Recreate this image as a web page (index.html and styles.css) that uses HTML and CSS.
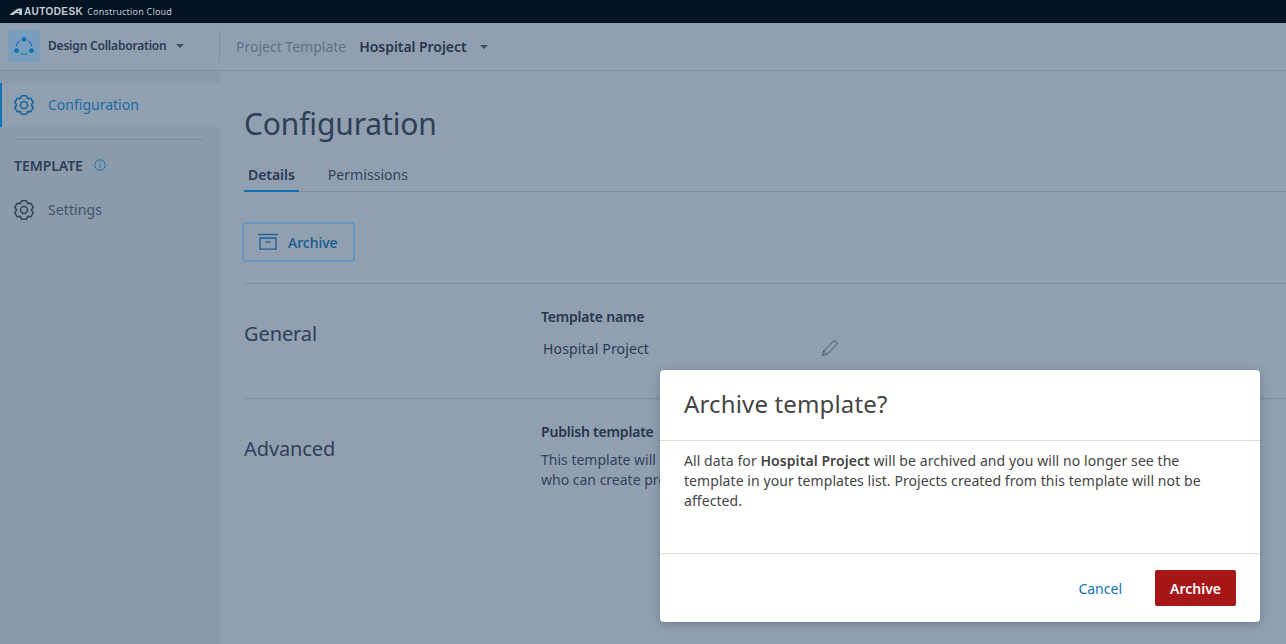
FILE: index.html
```html
<!DOCTYPE html>
<html lang="en">
<head>
<meta charset="utf-8">
<title>Configuration</title>
<link rel="stylesheet" href="styles.css">
</head>
<body>
<div class="app">
  <div class="brandbar">
    <svg class="brand-logo" width="12" height="7" viewBox="0 0 12 7"><path d="M0 7 L0.300 6 L7 1 Q7.800 0.400 9 0.400 L12 0.400 L12 7 L9.300 7 L9.300 5.300 L5.500 5.300 L3.400 7 Z M7 3.900 L9.300 3.900 L9.300 2.200 Z" fill="#c4cad0" fill-rule="evenodd"/></svg>
    <span class="brand-name">AUTODESK</span>
    <span class="brand-product">Construction Cloud</span>
  </div>
  <header class="header">
    <div class="product">
      <div class="product-icon">
        <svg width="22" height="22" viewBox="0 0 22 22" fill="none">
          <circle cx="11" cy="4.200" r="2.300" fill="#0f6fae"/>
          <circle cx="3.600" cy="15.600" r="2.300" fill="#0f6fae"/>
          <circle cx="18.400" cy="15.600" r="2.300" fill="#0f6fae"/>
          <path d="M6.600 5.600 A9 9 0 0 0 3.200 11.200 M15.400 5.600 A9 9 0 0 1 18.800 11.200 M7.600 19 H14.400" stroke="#0f6fae" stroke-width="1.100"/>
        </svg>
      </div>
      <span class="product-name">Design Collaboration</span>
      <span class="caret"></span>
    </div>
    <div class="crumbs">
      <span class="crumb-muted">Project Template</span>
      <span class="crumb-strong">Hospital Project</span>
      <span class="caret"></span>
    </div>
  </header>
  <div class="body">
    <aside class="sidebar">
      <div class="nav-item nav-active">
        <svg class="gear" width="22" height="22" viewBox="0 0 24 24" fill="none" stroke="#16659c" stroke-width="1.700" stroke-linejoin="round"><path d="M9.460 1.810H14.540L16 5.070 19.550 4.700 22.090 9.100 20 12 22.090 14.900 19.550 19.300 16 18.930 14.540 22.190H9.460L8 18.930 4.450 19.300 1.910 14.900 4 12 1.910 9.100 4.450 4.700 8 5.070Z"/><circle cx="12" cy="12" r="3.800"/></svg>
        <span>Configuration</span>
      </div>
      <div class="nav-rule"></div>
      <div class="nav-section">
        <span>TEMPLATE</span>
        <svg width="12" height="12" viewBox="0 0 12 12" fill="none" stroke="#1f76b2"><circle cx="6" cy="6" r="5.200"/><path d="M6 5.200V9M6 3v1.200"/></svg>
      </div>
      <div class="nav-item nav-plain">
        <svg class="gear" width="22" height="22" viewBox="0 0 24 24" fill="none" stroke="#36465c" stroke-width="1.700" stroke-linejoin="round"><path d="M9.460 1.810H14.540L16 5.070 19.550 4.700 22.090 9.100 20 12 22.090 14.900 19.550 19.300 16 18.930 14.540 22.190H9.460L8 18.930 4.450 19.300 1.910 14.900 4 12 1.910 9.100 4.450 4.700 8 5.070Z"/><circle cx="12" cy="12" r="3.800"/></svg>
        <span>Settings</span>
      </div>
    </aside>
    <main class="main">
      <h1 class="title">Configuration</h1>
      <div class="tabs">
        <div class="tab tab-active">Details</div>
        <div class="tab">Permissions</div>
      </div>
      <button class="archive-btn">
        <svg width="22" height="18" viewBox="0 0 22 18" fill="none" stroke="#175f98" stroke-width="1.300"><path d="M1 1.500H21"/><path d="M3 5H19V16.200H3Z" stroke-linejoin="round"/><path d="M8.500 9H13.500"/></svg>
        <span>Archive</span>
      </button>
      <section class="section">
        <h2 class="section-title">General</h2>
        <div class="section-body">
          <div class="label">Template name</div>
          <div class="name-row">
            <span class="value">Hospital Project</span>
            <svg width="18" height="18" viewBox="0 0 18 18" fill="none" stroke="#445366" stroke-width="1" stroke-linejoin="round"><path d="M1.500 16.500L2.700 12 12.200 2.400a1.800 1.800 0 0 1 2.600 0l.7.700a1.800 1.800 0 0 1 0 2.600L6 15.300Z"/><path d="M2.700 12L6 15.300"/></svg>
          </div>
        </div>
      </section>
      <section class="section section-adv">
        <h2 class="section-title">Advanced</h2>
        <div class="section-body">
          <div class="label">Publish template</div>
          <p class="desc">This template will be published and available to all members<br>who can create projects in this account.</p>
        </div>
      </section>
    </main>
  </div>
  <div class="modal">
    <div class="modal-head">Archive template?</div>
    <div class="modal-text">All data for <b>Hospital Project</b> will be archived and you will no longer see the template in your templates list. Projects created from this template will not be affected.</div>
    <div class="modal-foot">
      <span class="cancel">Cancel</span>
      <button class="confirm">Archive</button>
    </div>
  </div>
</div>
</body>
</html>
```
FILE: styles.css
```css
* { box-sizing: border-box; }
html, body { margin: 0; height: 100%; }
body { font-family: "Noto Sans", "Open Sans", sans-serif; font-size: 14px; color: #2b3a50; background: #90a0b1; overflow: hidden; }
.app { position: relative; width: 1286px; height: 644px; overflow: hidden; display: flex; flex-direction: column; }

.brandbar { height: 23px; flex: none; background: #021324; display: flex; align-items: center; padding-left: 10px; color: #c4cad0; }
.brand-logo { margin-right: 2px; }
.brand-name { font-family: "Liberation Sans", sans-serif; font-weight: 700; font-size: 10px; letter-spacing: .4px; margin-right: 4px; }
.brand-product { font-size: 9px; letter-spacing: .2px; }

.header { height: 48px; flex: none; display: flex; align-items: center; border-bottom: 1px solid #7f90a3; }
.product { width: 220px; height: 32px; display: flex; align-items: center; padding-left: 8px; margin-top: -2px; border-right: 1px solid #7f90a3; }
.product-icon { width: 32px; height: 32px; border-radius: 3px; background: #789dbd; display: flex; align-items: center; justify-content: center; margin-right: 8px; }
.product-name { font-size: 12px; font-weight: 600; color: #2b3a55; margin-right: 9px; letter-spacing: -.2px; margin-top: -1px; }
.caret { width: 0; height: 0; border-left: 4.500px solid transparent; border-right: 4.500px solid transparent; border-top: 4.500px solid #3d4c62; }
.crumbs { display: flex; align-items: center; padding-left: 16px; }
.crumb-muted { color: #5f7189; margin-right: 13px; font-size: 14px; }
.crumb-strong { font-weight: 600; color: #27364c; margin-right: 13px; font-size: 14px; letter-spacing: -.05px; }

.body { flex: 1; display: flex; min-height: 0; }
.sidebar { width: 220px; flex: none; background: #8a9bac; padding-top: 12px; }
.nav-item { height: 44px; display: flex; align-items: center; padding-left: 13px; gap: 13px; font-size: 14px; padding-bottom: 1px; }
.nav-active { background: #90a0b1; border-left: 2px solid #0f75b5; padding-left: 11px; color: #186ca6; }
.nav-plain { color: #43536b; letter-spacing: .1px; }
.nav-rule { height: 1px; background: #7d8ea1; margin: 12px 16px 0; }
.nav-section { display: flex; align-items: center; gap: 11px; height: 20px; margin: 15px 0 13px; padding-left: 14px; font-size: 14px; font-weight: 600; color: #2f3e57; letter-spacing: -.05px; }

.main { flex: 1; padding: 32px 0 0 24px; min-width: 0; }
.title { margin: 0; font-size: 30px; line-height: 41px; font-weight: 400; color: #2f3f55; letter-spacing: -.15px; }
.tabs { display: flex; gap: 25px; height: 31px; margin-top: 17px; border-bottom: 1px solid #7d8ea1; }
.tab { padding: 0 4px; line-height: 28px; height: 31px; color: #35445b; font-size: 14px; letter-spacing: .05px; }
.tab-active { font-weight: 600; color: #2b3a55; border-bottom: 2px solid #0f6fae; letter-spacing: -.05px; }

.archive-btn { display: flex; align-items: center; gap: 9px; width: 113px; height: 40px; margin: 30px 0 0 -2px; padding: 0 0 0 13px; background: transparent; border: 2px solid #6797bf; border-radius: 3px; font: inherit; font-size: 14px; font-weight: 500; color: #15598f; }

.section { display: flex; border-top: 1px solid #7d8ea1; height: 115px; margin-top: 21px; }
.section-adv { margin-top: 0; }
.section-title { margin: 0; width: 297px; padding-top: 36px; font-size: 20px; line-height: 27px; font-weight: 400; color: #2f3f55; letter-spacing: -.1px; }
.section-body { flex: 1; padding-top: 23px; }
.label { font-weight: 600; font-size: 14px; line-height: 20px; color: #27364c; letter-spacing: -.2px; }
.name-row { display: flex; align-items: center; padding-left: 2px; margin-top: 11px; height: 20px; }
.value { width: 278px; color: #2b3a50; letter-spacing: .15px; }
.desc { margin: 8px 0 0; line-height: 20px; color: #33425a; white-space: nowrap; }

.modal { position: absolute; left: 660px; top: 370px; width: 600px; height: 252px; background: #fff; border-radius: 4px; box-shadow: 0 2px 10px rgba(40,55,75,.35); display: flex; flex-direction: column; color: #444; }
.modal-head { height: 71px; flex: none; padding-left: 24px; font-size: 24px; line-height: 68px; letter-spacing: .15px; border-bottom: 1px solid #dcdcdc; color: #454545; }
.modal-text { height: 113px; flex: none; padding: 10px 24px 0; line-height: 20px; font-size: 14px; border-bottom: 1px solid #dcdcdc; letter-spacing: .07px; }
.modal-text b { font-weight: 600; }
.modal-foot { flex: 1; display: flex; align-items: center; justify-content: flex-end; padding-right: 24px; gap: 33px; }
.cancel { color: #0f75b5; font-size: 14px; }
.confirm { width: 81px; height: 36px; background: #a61616; color: #fff; border: 0; border-radius: 2px; font: inherit; font-size: 14px; font-weight: 600; }
```
